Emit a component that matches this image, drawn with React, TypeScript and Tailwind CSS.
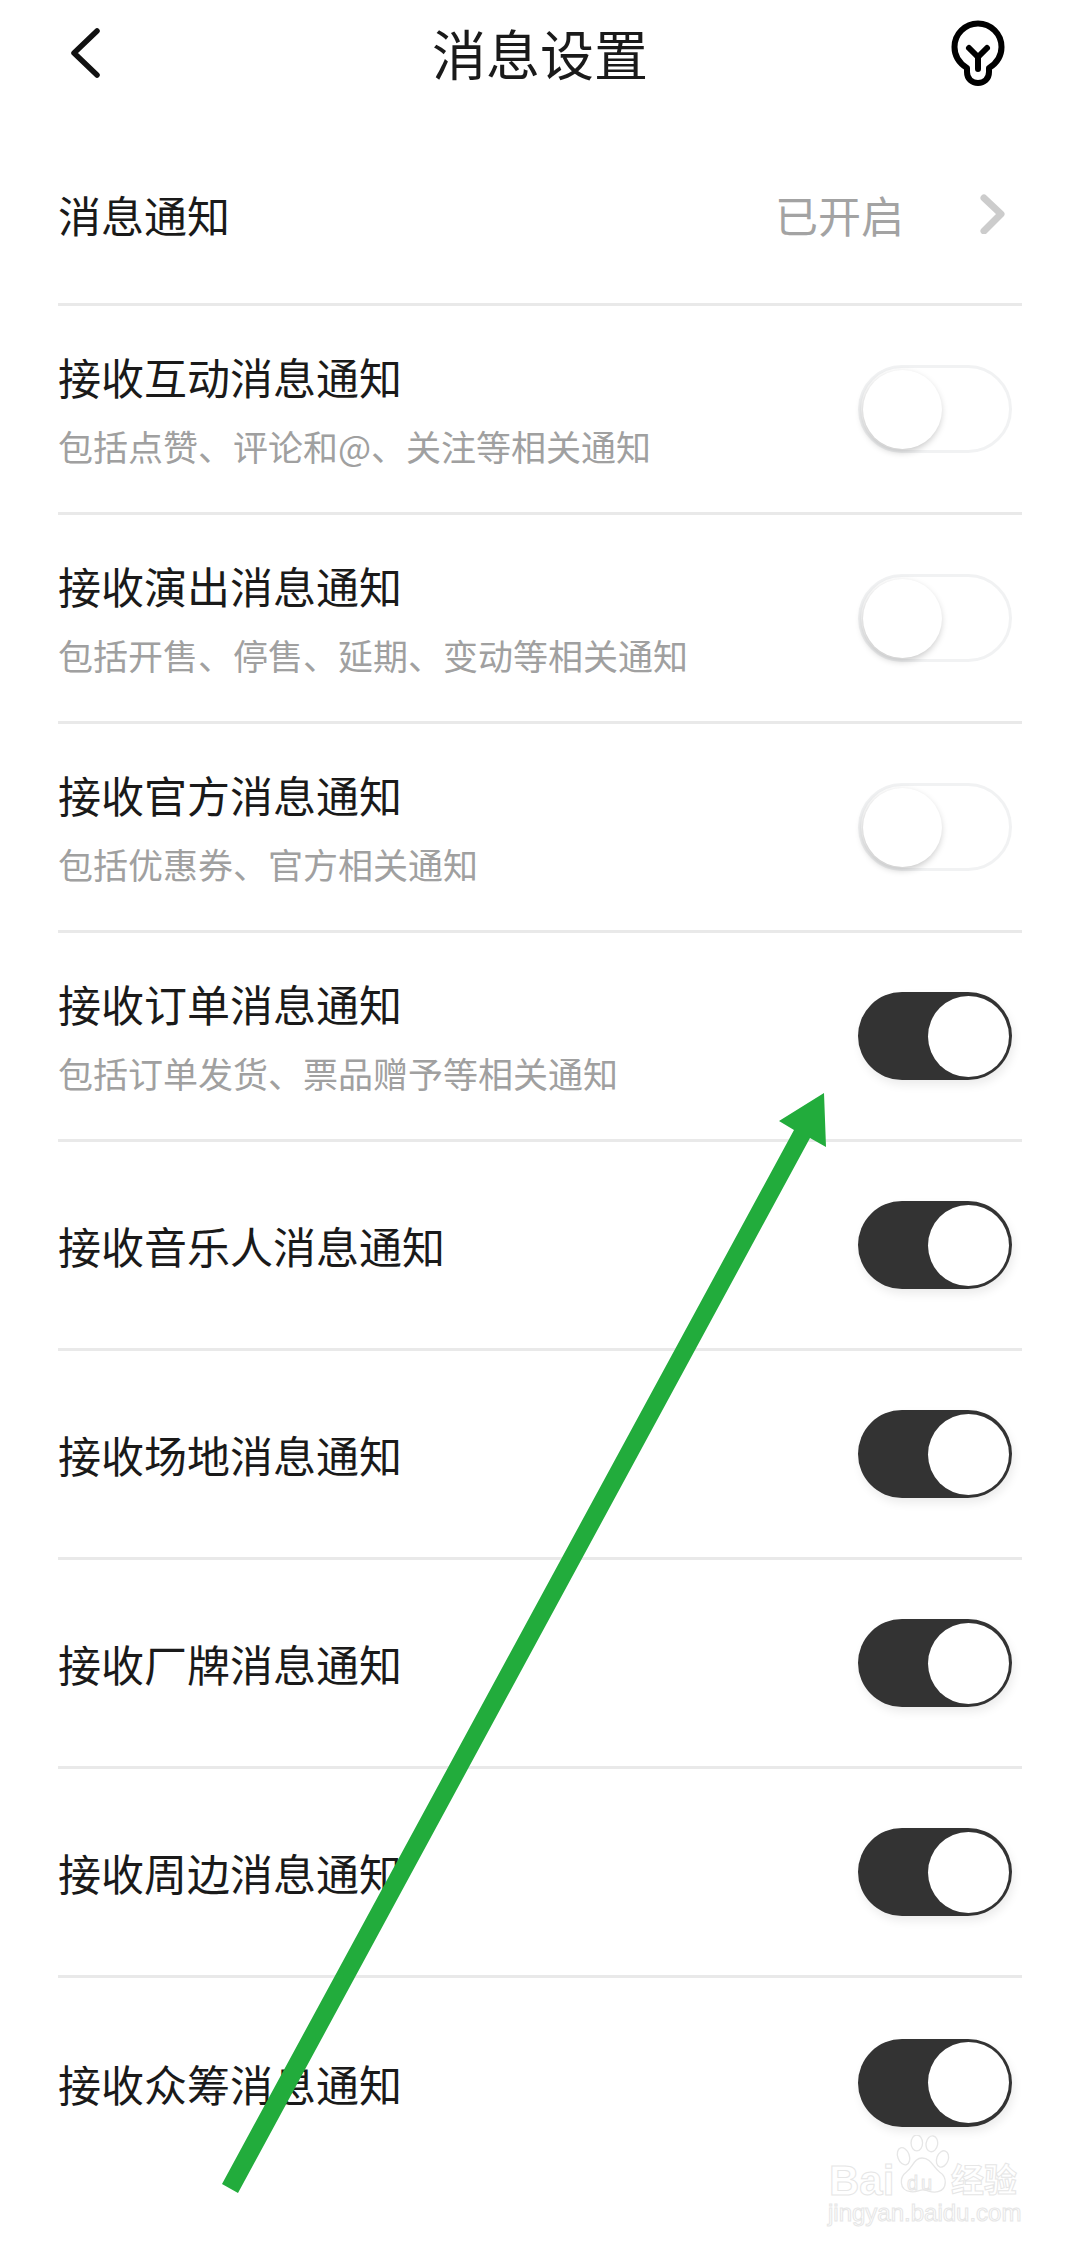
import React from "react";

type Item = {
  title: string;
  sub?: string;
  on: boolean;
};

const items: Item[] = [
  { title: "接收互动消息通知", sub: "包括点赞、评论和@、关注等相关通知", on: false },
  { title: "接收演出消息通知", sub: "包括开售、停售、延期、变动等相关通知", on: false },
  { title: "接收官方消息通知", sub: "包括优惠券、官方相关通知", on: false },
  { title: "接收订单消息通知", sub: "包括订单发货、票品赠予等相关通知", on: true },
  { title: "接收音乐人消息通知", on: true },
  { title: "接收场地消息通知", on: true },
  { title: "接收厂牌消息通知", on: true },
  { title: "接收周边消息通知", on: true },
  { title: "接收众筹消息通知", on: true },
];

const Toggle: React.FC<{ on: boolean }> = ({ on }) => {
  if (on) {
    return (
      <div className="flex h-[88px] w-[154px] shrink-0 items-center justify-end rounded-full bg-[#333333] pr-[3px] shadow-[2px_5px_10px_rgba(0,0,0,0.08)]">
        <div className="h-[81px] w-[81px] rounded-full bg-white" />
      </div>
    );
  }
  return (
    <div className="flex h-[88px] w-[154px] shrink-0 items-center rounded-full border-[3px] border-[#f1f2f3] bg-white pl-[2px]">
      <div className="h-[79px] w-[79px] rounded-full bg-white shadow-[-1px_3px_7px_rgba(0,0,0,0.22)]" />
    </div>
  );
};

const Row: React.FC<{ item: Item; last: boolean }> = ({ item, last }) => (
  <div
    className={`flex h-[209px] items-center justify-between pr-[10px] ${
      last ? "" : "border-b-[3px] border-[#e9e9e9]"
    }`}
  >
    <div className={`flex flex-col ${item.sub ? "pb-[3px]" : ""}`}>
      <span className="text-[43px] leading-[60px] text-[#1a1a1a]">{item.title}</span>
      {item.sub && (
        <span className="mt-[16px] text-[35px] leading-[48px] text-[#a0a0a0]">{item.sub}</span>
      )}
    </div>
    <Toggle on={item.on} />
  </div>
);

const Watermark: React.FC = () => {
  const outline = "text-white [-webkit-text-stroke:1px_#e6e6e6]";
  return (
    <div className="absolute left-[826px] top-[2130px] h-[100px] w-[200px] font-['Liberation_Sans',sans-serif]">
      <span className={`absolute left-[3px] top-[33px] text-[42px] font-bold leading-[36px] ${outline}`}>Bai</span>
      <svg className="absolute left-[68px] top-[5px]" width="58" height="62" viewBox="0 0 64 70" fill="white" stroke="#e6e6e6" strokeWidth="1.5">
        <ellipse cx="10" cy="24" rx="6.5" ry="10" transform="rotate(-20 10 24)" />
        <ellipse cx="25" cy="9" rx="6.5" ry="9" />
        <ellipse cx="42" cy="10" rx="6.5" ry="9" transform="rotate(10 42 10)" />
        <ellipse cx="54" cy="27" rx="6.5" ry="9.5" transform="rotate(20 54 27)" />
        <path d="M31 26 C22 26 20 37 13 42 C6 47 4 62 18 64 C25 65 27 62 32 62 C38 62 41 66 49 64 C60 61 59 47 51 42 C44 37 41 26 31 26 Z" />
      </svg>
      <span className={`absolute left-[81px] top-[39px] text-[20px] leading-[28px] tracking-[3px] ${outline}`}>du</span>
      <span className={`absolute left-[125px] top-[28px] font-['Noto_Sans_CJK_SC',sans-serif] text-[33px] font-bold leading-[40px] ${outline}`}>经验</span>
      <span className={`absolute left-[2px] top-[70px] whitespace-nowrap text-[24px] leading-[26px] ${outline}`}>jingyan.baidu.com</span>
    </div>
  );
};

export default function App() {
  return (
    <div className="relative h-[2250px] w-[1080px] overflow-hidden bg-white font-['Noto_Sans_CJK_SC','Noto_Sans',sans-serif]">
      <div className="grid h-[106px] grid-cols-[1fr_auto_1fr] items-center pl-[70px] pr-[75px]">
        <svg width="32" height="50" viewBox="0 0 32 50" fill="none" stroke="#111111" strokeWidth="5.5" strokeLinecap="round" strokeLinejoin="round">
          <path d="M27 3 L4 25 L27 47" />
        </svg>
        <span className="pl-[5px] text-[54px] leading-[70px] text-[#1a1a1a]">消息设置</span>
        <svg className="justify-self-end" width="54" height="66" viewBox="12 5 54 66" fill="none" stroke="#000000" strokeWidth="6" strokeLinecap="round" strokeLinejoin="round">
          <path d="M28 53 C20 48 15.5 41 15.5 32 A23.5 23.5 0 0 1 62.5 32 C62.5 41 58 48 50 53 L50 57 C50 64 45 68 39 68 C33 68 28 64 28 57 Z" />
          <path d="M30 33 L39 42 L48 33 M39 42 V54" />
        </svg>
      </div>

      <div className="mx-[58px]">
        <div className="flex h-[200px] items-center justify-between border-b-[3px] border-[#e9e9e9] pr-[15px] pt-[18px]">
          <span className="text-[43px] leading-[60px] text-[#1a1a1a]">消息通知</span>
          <div className="flex items-center gap-[75px]">
            <span className="text-[43px] leading-[60px] text-[#a3a3a3]">已开启</span>
            <svg width="28" height="40" viewBox="0 0 28 40" fill="none" stroke="#cccccc" strokeWidth="7" strokeLinecap="round" strokeLinejoin="round">
              <path d="M5 4 L22 20 L5 37" />
            </svg>
          </div>
        </div>
        {items.map((item, i) => (
          <Row key={item.title} item={item} last={i === items.length - 1} />
        ))}
      </div>

      <Watermark />

      {/* green annotation arrow over the list */}
      <svg className="absolute left-0 top-0" width="1080" height="2250" viewBox="0 0 1080 2250">
        <polygon points="824,1093 779,1121 794,1130 222,2184 238,2193 810,1138 826,1147" fill="#22ac3c" />
      </svg>
    </div>
  );
}
